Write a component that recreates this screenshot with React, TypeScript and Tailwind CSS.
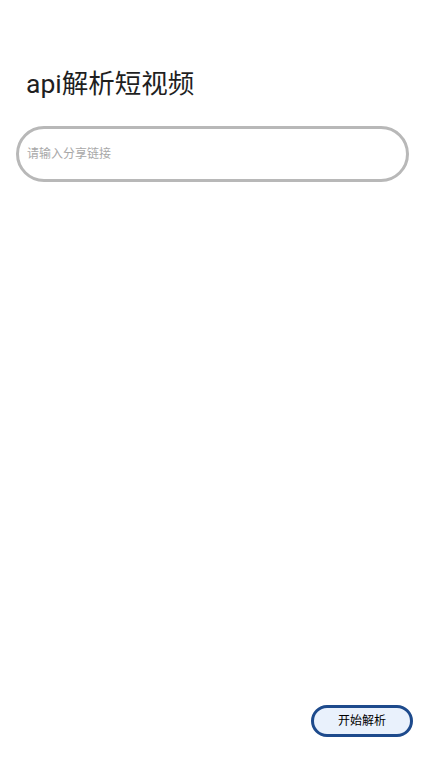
export default function App() {
  return (
    <div
      className="flex h-[757px] flex-col bg-white"
      style={{ fontFamily: 'Roboto, "Noto Sans CJK SC", sans-serif' }}
    >
      <h1 className="mt-[65px] pl-[26px] text-[26.5px] leading-[38px] font-normal text-[#1f1f1f]">
        api解析短视频
      </h1>
      <div className="mx-4 mt-[23px] flex h-[56px] items-center rounded-full border-[3px] border-[#b8b8b8] px-2">
        <input
          className="w-full bg-transparent text-[12px] text-[#333] outline-none placeholder:text-[#a8a8a8]"
          placeholder="请输入分享链接"
        />
      </div>
      <div className="mt-auto mr-3 mb-5 flex justify-end">
        <button className="flex h-[32px] w-[102px] items-center justify-center rounded-full border-[3px] border-[#1d4a8c] bg-[#e9f1fc] text-[12px] text-black">
          开始解析
        </button>
      </div>
    </div>
  );
}
